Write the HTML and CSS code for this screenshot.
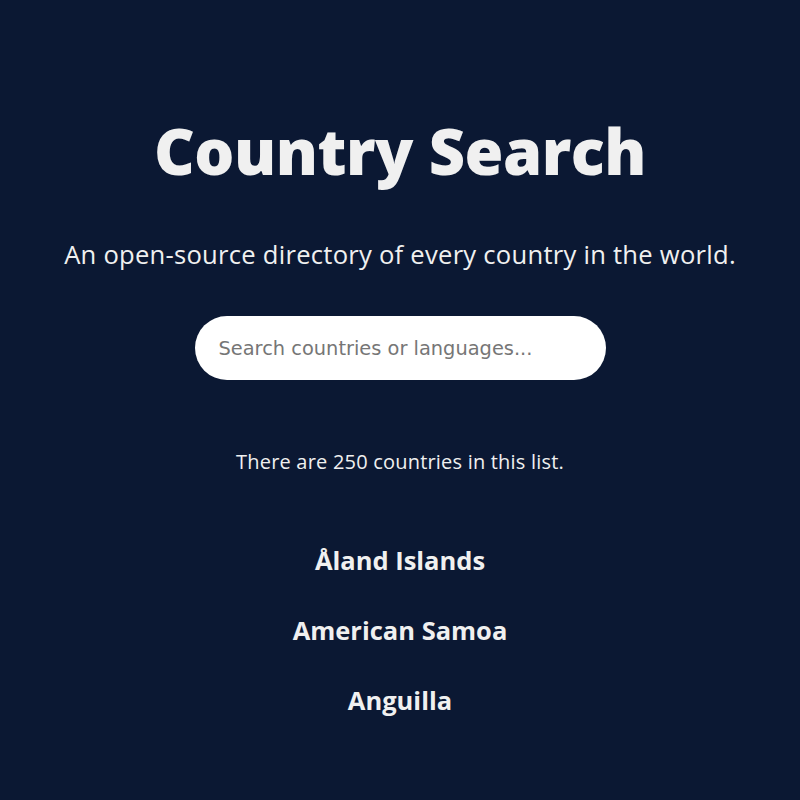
FILE: index.html
```html
<!DOCTYPE html>
<html lang="en">
<head>
<meta charset="utf-8">
<title>Country Search</title>
<link rel="stylesheet" href="styles.css">
</head>
<body>
<main class="app">
  <h1 class="title">Country Search</h1>
  <p class="subtitle">An open-source directory of every country in the world.</p>
  <input class="search" type="text" placeholder="Search countries or languages...">
  <p class="count">There are 250 countries in this list.</p>
  <ul class="list">
    <li class="item">Åland Islands</li>
    <li class="item">American Samoa</li>
    <li class="item">Anguilla</li>
  </ul>
</main>
</body>
</html>
```
FILE: styles.css
```css
html, body {
  margin: 0;
  padding: 0;
  background: #0b1833;
  height: 100%;
}
body {
  font-family: "Open Sans", "Noto Sans", sans-serif;
  color: #f0f0f0;
}
.app {
  display: flex;
  flex-direction: column;
  align-items: center;
  padding-top: 106px;
}
.title {
  margin: 0;
  font-size: 63px;
  font-weight: 800;
  line-height: 90px;
  letter-spacing: -0.5px;
}
.subtitle {
  margin: 39px 0 0;
  font-size: 25.6px;
  line-height: 40px;
  letter-spacing: 0.25px;
}
.search {
  margin-top: 41px;
  width: 411px;
  height: 64px;
  box-sizing: border-box;
  border: none;
  border-radius: 32px;
  padding: 0 24px;
  font-family: "DejaVu Sans", sans-serif;
  font-size: 19.4px;
  background: #fff;
  outline: none;
}
.search::placeholder {
  color: #767676;
}
.count {
  margin: 67px 0 0;
  font-size: 20px;
  line-height: 30px;
  letter-spacing: 0.2px;
}
.list {
  list-style: none;
  margin: 66px 0 0;
  padding: 0;
  display: flex;
  flex-direction: column;
  align-items: center;
  gap: 36px;
}
.item {
  font-size: 25.5px;
  font-weight: 700;
  line-height: 34px;
}
```
